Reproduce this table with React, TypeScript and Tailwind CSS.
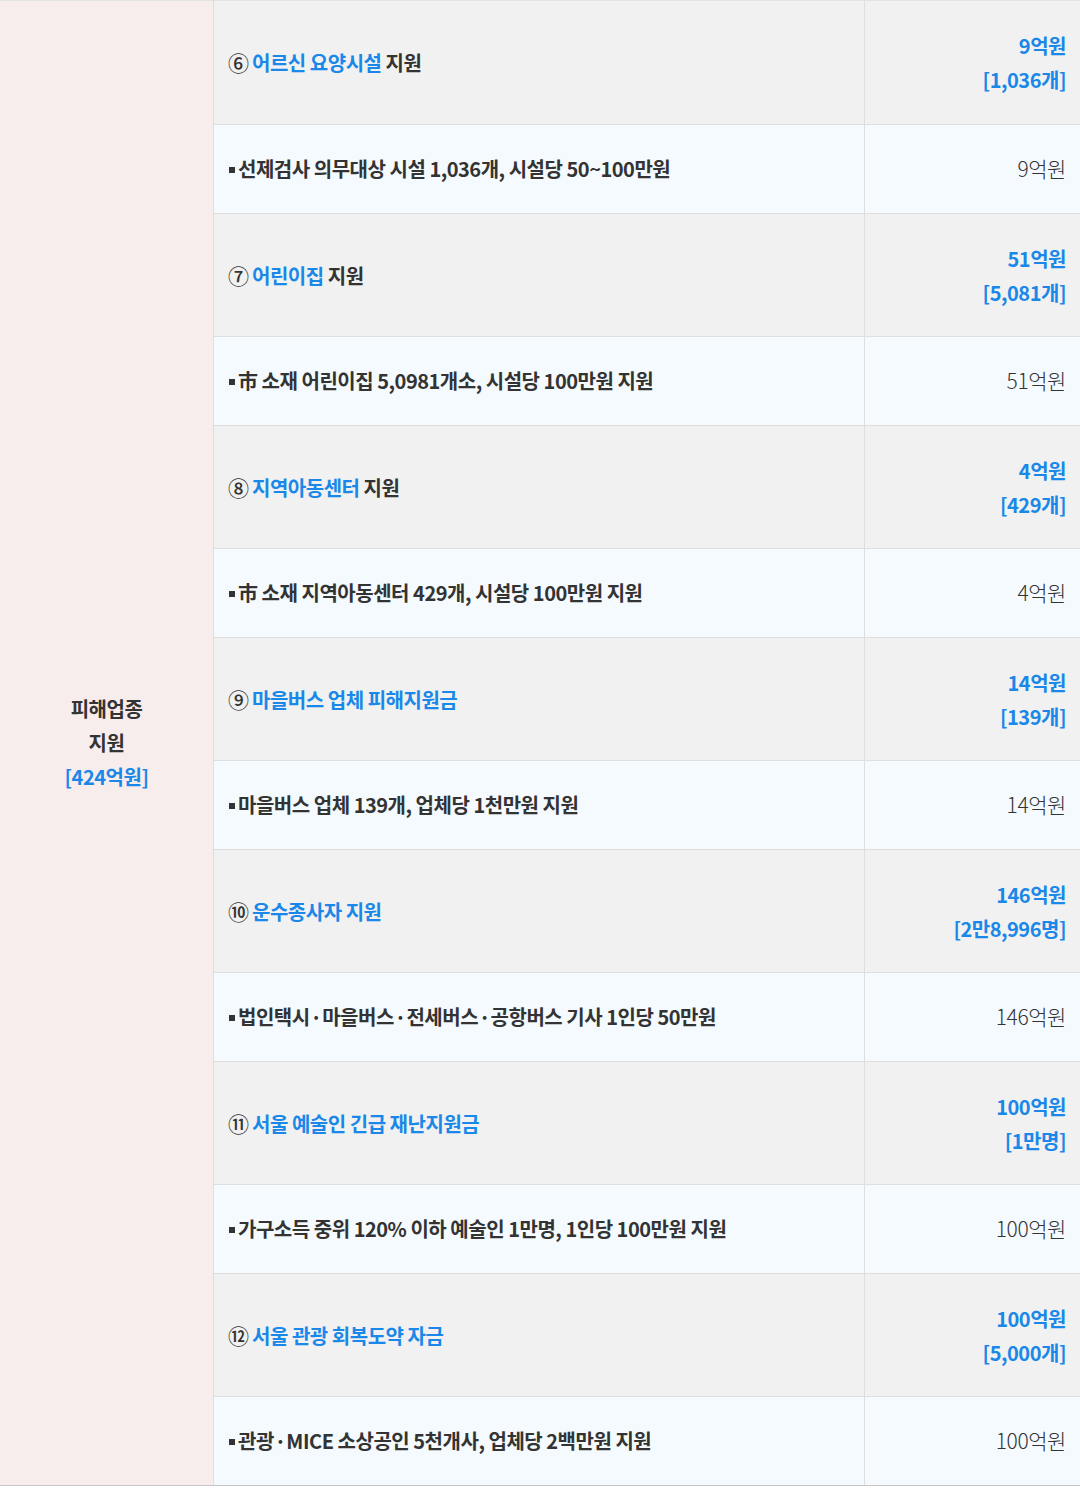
const items = [
  {
    no: "⑥",
    blue: "어르신 요양시설",
    rest: " 지원",
    amount: "9억원",
    count: "[1,036개]",
    detail: "선제검사 의무대상 시설 1,036개, 시설당 50~100만원",
    detailAmount: "9억원",
  },
  {
    no: "⑦",
    blue: "어린이집",
    rest: " 지원",
    amount: "51억원",
    count: "[5,081개]",
    detail: "市 소재 어린이집 5,0981개소, 시설당 100만원 지원",
    detailAmount: "51억원",
  },
  {
    no: "⑧",
    blue: "지역아동센터",
    rest: " 지원",
    amount: "4억원",
    count: "[429개]",
    detail: "市 소재 지역아동센터 429개, 시설당 100만원 지원",
    detailAmount: "4억원",
  },
  {
    no: "⑨",
    blue: "마을버스 업체 피해지원금",
    rest: "",
    amount: "14억원",
    count: "[139개]",
    detail: "마을버스 업체 139개, 업체당 1천만원 지원",
    detailAmount: "14억원",
  },
  {
    no: "⑩",
    blue: "운수종사자 지원",
    rest: "",
    amount: "146억원",
    count: "[2만8,996명]",
    detail: "법인택시 · 마을버스 · 전세버스 · 공항버스 기사 1인당 50만원",
    detailAmount: "146억원",
  },
  {
    no: "⑪",
    blue: "서울 예술인 긴급 재난지원금",
    rest: "",
    amount: "100억원",
    count: "[1만명]",
    detail: "가구소득 중위 120% 이하 예술인 1만명, 1인당 100만원 지원",
    detailAmount: "100억원",
  },
  {
    no: "⑫",
    blue: "서울 관광 회복도약 자금",
    rest: "",
    amount: "100억원",
    count: "[5,000개]",
    detail: "관광 · MICE 소상공인 5천개사, 업체당 2백만원 지원",
    detailAmount: "100억원",
  },
];

// 가운뎃점은 폭을 좁혀서 표시
function Detail({ text }: { text: string }) {
  const parts = text.split(" · ");
  return (
    <span className="whitespace-pre">
      {parts.map((p, i) => (
        <span key={i}>
          {i > 0 && (
            <>
              {" "}
              <span className="mx-[-3.5px]">·</span>{" "}
            </>
          )}
          {p}
        </span>
      ))}
    </span>
  );
}

export default function App() {
  return (
    <div className="w-[1080px] bg-white font-['Noto_Sans_CJK_KR','Noto_Sans',sans-serif] text-[#333] tracking-[-0.03em]">
      <div className="flex border-t border-b border-t-[#e2e2e2] border-b-[#c6c6c6]">
        {/* 구분 */}
        <div className="w-[214px] shrink-0 bg-[#f8eded] border-r border-[#dedede] flex flex-col items-center justify-center text-[20px] font-bold leading-[34px] text-center">
          <p>피해업종</p>
          <p>지원</p>
          <p className="text-[#1a88e8]">[424억원]</p>
        </div>

        <div className="flex-1 flex flex-col">
          {items.map((it, i) => (
            <div key={it.no}>
              {/* 사업명 */}
              <div
                className={`flex h-[123px] bg-[#f1f1f1] ${
                  i > 0 ? "border-t border-[#dedede]" : ""
                }`}
              >
                <div className="w-[651px] shrink-0 border-r border-[#dedede] pl-[14px] flex items-center text-[20px] font-bold pt-[1px]">
                  <span className="text-[21px] font-medium mr-[3px] tracking-normal">{it.no}</span>
                  <span className="text-[#1a88e8]">{it.blue}</span>
                  {it.rest && <span className="whitespace-pre">{it.rest}</span>}
                </div>
                <div className="flex-1 pr-[14px] flex flex-col items-end justify-center text-[20px] font-bold leading-[34px] text-[#1a88e8] pt-[1px]">
                  <p>{it.amount}</p>
                  <p>{it.count}</p>
                </div>
              </div>
              {/* 세부내역 */}
              <div className="flex h-[89px] bg-[#f4fafe] border-t border-[#dedede]">
                <div className="w-[651px] shrink-0 border-r border-[#dedede] pl-[15px] flex items-center text-[20px] font-bold">
                  <span className="w-[6px] h-[6px] bg-[#333] mr-[3px] mt-[2px]" />
                  <Detail text={it.detail} />
                </div>
                <div className="flex-1 pr-[14px] flex items-center justify-end text-[21px] font-light tracking-[-0.02em] text-[#333]">
                  {it.detailAmount}
                </div>
              </div>
            </div>
          ))}
        </div>
      </div>
    </div>
  );
}
